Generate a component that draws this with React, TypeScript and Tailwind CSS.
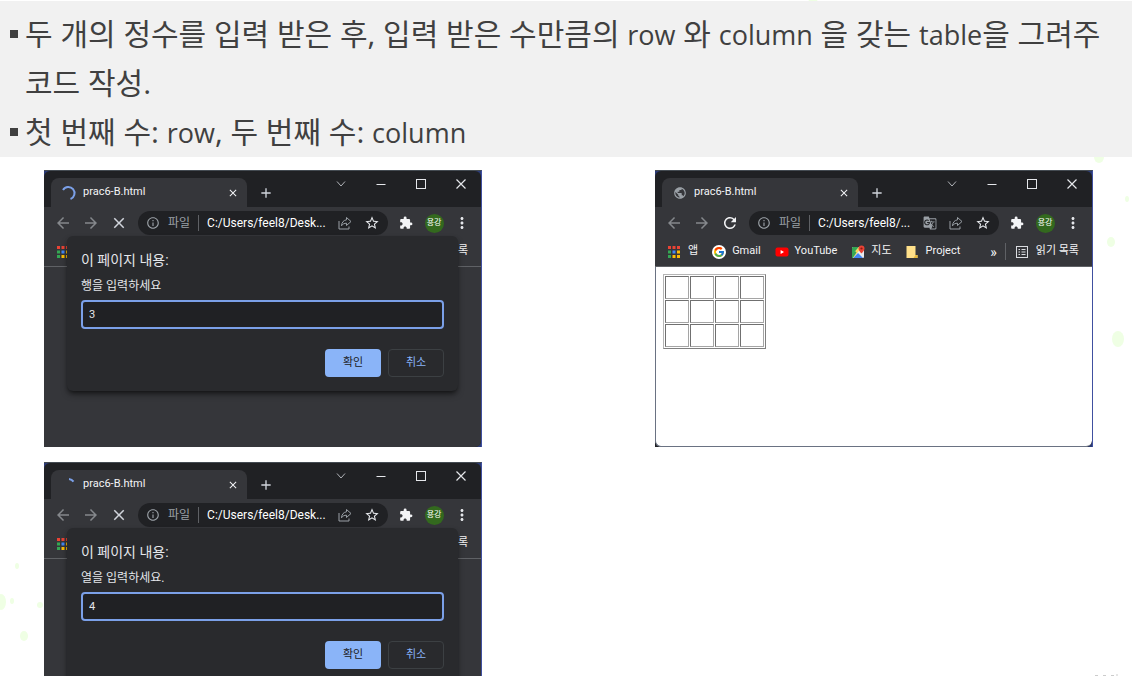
import React from 'react';
import { FcGoogle } from 'react-icons/fc';
import {
    MdAdd,
    MdArrowBack,
    MdArrowForward,
    MdClose,
    MdExtension,
    MdGTranslate,
    MdInfoOutline,
    MdMoreVert,
    MdPublic,
    MdRefresh,
    MdStarBorder,
} from 'react-icons/md';

const appColors = [
    '#ea4335', '#ea4335', '#ea4335',
    '#34a853', '#4285f4', '#fbbc04',
    '#34a853', '#fbbc04', '#fbbc04',
];

function AppsIcon() {
    return (
        <svg className="h-3 w-3 shrink-0" viewBox="0 0 12 12">
            {appColors.map((color, i) => (
                <rect key={i} x={(i % 3) * 4.5} y={Math.floor(i / 3) * 4.5} width="3" height="3" fill={color} />
            ))}
        </svg>
    );
}

function YouTubeIcon() {
    return (
        <svg className="h-3.5 w-3.5 shrink-0" viewBox="0 0 14 14">
            <rect x="0.5" y="2.5" width="13" height="9" rx="2" fill="#ff0000" />
            <path d="M5.6 5v4L9 7z" fill="#fff" />
        </svg>
    );
}

function MapsIcon() {
    return (
        <svg className="h-3.5 w-3.5 shrink-0" viewBox="0 0 14 14">
            <rect x="1" y="2" width="12" height="11" rx="1" fill="#e8eaed" />
            <path d="M1 3a1 1 0 0 1 1-1h6L1 10z" fill="#34a853" />
            <path d="M2 13l5-5 5 5z" fill="#4285f4" />
            <path d="M1 10l7-8 1.5 2L2 13H1z" fill="#fbd75b" />
            <path d="M1 13V9l3-3 1.5 1.5L1.8 13z" fill="#34a853" />
            <path d="M10.5 0.5a3 3 0 0 1 3 3c0 2-3 5-3 5s-3-3-3-5a3 3 0 0 1 3-3z" fill="#ea4335" />
            <circle cx="10.5" cy="3.5" r="1.1" fill="#8c1a11" />
        </svg>
    );
}

function FolderIcon() {
    return (
        <svg className="h-3 w-3 shrink-0" viewBox="0 0 12 12">
            <path d="M0.5 0h9v9h2v3h-11z" fill="#ffe08a" />
            <path d="M9.5 9h2v3h-4z" fill="#e8b93c" />
        </svg>
    );
}

function ReadingListIcon() {
    return (
        <svg className="h-3 w-3 shrink-0" viewBox="0 0 12 12" fill="none" stroke="#dadce0">
            <rect x="0.5" y="0.5" width="11" height="11" />
            <path d="M2.5 3.5h1.5M2.5 6h1.5M2.5 8.5h1.5M5.5 3.5h4M5.5 6h4M5.5 8.5h4" />
        </svg>
    );
}

function ShareIcon() {
    return (
        <svg className="h-3.5 w-3.5" viewBox="0 0 14 14" fill="none" stroke="#9aa0a6" strokeLinejoin="round">
            <path d="M1 5v8h10v-2.5" />
            <path d="M8.5 1.5l4.5 4-4.5 4V7.2C6.3 7.2 4.6 8 3.5 9.8 3.7 6.5 5.5 4.2 8.5 3.8z" />
        </svg>
    );
}

function Spinner({ short }: { short?: boolean }) {
    return (
        <svg className="h-4 w-4" viewBox="0 0 16 16" fill="none" stroke="#7ba0e8" strokeWidth="2">
            <path d={short ? 'M8 2a6 6 0 0 1 4.5 2.6' : 'M2 5a6.2 6.2 0 1 1 7.5 9'} />
        </svg>
    );
}

function WindowControls() {
    const button = 'flex h-[26px] w-10 items-center justify-center';
    return (
        <div className="ml-auto flex text-gray-200">
            <button className={button} aria-label="Search tabs">
                <svg className="h-2.5 w-2.5" viewBox="0 0 10 10" fill="none" stroke="#b0b3b8">
                    <path d="M1 2.5l4 4.5 4-4.5" />
                </svg>
            </button>
            <button className={button} aria-label="Minimize">
                <svg className="h-2.5 w-2.5" viewBox="0 0 10 10" stroke="currentColor">
                    <path d="M0.5 5.5h9" />
                </svg>
            </button>
            <button className={button} aria-label="Maximize">
                <svg className="h-2.5 w-2.5" viewBox="0 0 10 10" fill="none" stroke="currentColor">
                    <rect x="0.5" y="0.5" width="9" height="9" />
                </svg>
            </button>
            <button className={button} aria-label="Close">
                <svg className="h-2.5 w-2.5" viewBox="0 0 10 10" stroke="currentColor" strokeWidth="1.2">
                    <path d="M0.5 0.5l9 9M9.5 0.5l-9 9" />
                </svg>
            </button>
        </div>
    );
}

function BookmarkBar({ covered }: { covered?: boolean }) {
    const bar =
        'flex h-7 shrink-0 items-center border-b border-[#5f6165] bg-[#35363a] pr-[13px] pb-0.5 pl-[13px] text-[11px] whitespace-nowrap text-gray-100';

    // a dialog lies over the bar, only its two ends stay visible
    if (covered) {
        return (
            <nav className={`${bar} justify-between`}>
                <AppsIcon />
                <span>록</span>
            </nav>
        );
    }

    return (
        <nav className={bar}>
            <a href="#apps" className="flex items-center gap-2">
                <AppsIcon />앱
            </a>
            <a href="#gmail" className="ml-3.5 flex items-center gap-1.5">
                <span className="flex h-3.5 w-3.5 items-center justify-center rounded-full bg-white">
                    <FcGoogle className="h-3 w-3" />
                </span>
                Gmail
            </a>
            <a href="#youtube" className="ml-3.5 flex items-center gap-1.5">
                <YouTubeIcon />YouTube
            </a>
            <a href="#map" className="ml-3.5 flex items-center gap-1.5">
                <MapsIcon />지도
            </a>
            <a href="#project" className="ml-3.5 flex items-center gap-2">
                <FolderIcon />Project
            </a>
            <button className="ml-auto text-sm leading-4" aria-label="More bookmarks">»</button>
            <a href="#reading-list" className="ml-2 flex items-center gap-2 border-l border-[#5f6165] pl-2.5">
                <ReadingListIcon />읽기 목록
            </a>
        </nav>
    );
}

type BrowserProps = {
    url: string;
    favicon: React.ReactNode;
    loading?: boolean;
    children: React.ReactNode;
};

function Browser({ url, favicon, loading, children }: BrowserProps) {
    const tool = 'flex h-7 w-7 shrink-0 items-center justify-center';
    return (
        <section className="w-full max-w-[438px] border-t border-r border-t-[#444b52] border-r-[#4050a0] bg-[#2b3a75] font-['Roboto','Noto_Sans_CJK_KR',sans-serif]">
            <div className="relative flex h-[276px] flex-col overflow-hidden rounded-t-md rounded-br-md bg-[#202124]">
                <div className="flex h-9 shrink-0 pl-[7px]">
                    <div className="mt-[7px] flex w-[196px] items-center rounded-t-lg bg-[#35363a] px-2 text-[11px] text-gray-100">
                        <span className="flex w-5 justify-center">{favicon}</span>
                        <span className="ml-1 flex-1">prac6-B.html</span>
                        <button aria-label="Close tab">
                            <MdClose className="h-3 w-3" />
                        </button>
                    </div>
                    <button className="mt-[7px] ml-[11px] flex items-center text-gray-300" aria-label="New tab">
                        <MdAdd className="h-4 w-4" />
                    </button>
                    <WindowControls />
                </div>
                <div className="flex h-8 shrink-0 items-center bg-[#35363a] px-[5px]">
                    <button className={tool} aria-label="Back">
                        <MdArrowBack className="h-[18px] w-[18px] text-[#85888c]" />
                    </button>
                    <button className={tool} aria-label="Forward">
                        <MdArrowForward className="h-[18px] w-[18px] text-[#85888c]" />
                    </button>
                    <button className={tool} aria-label={loading ? 'Stop' : 'Reload'}>
                        {loading ? (
                            <MdClose className="h-[18px] w-[18px] text-gray-300" />
                        ) : (
                            <MdRefresh className="h-[18px] w-[18px] text-gray-100" />
                        )}
                    </button>
                    <div className="mr-1 ml-[5px] flex h-6 min-w-0 flex-1 items-center rounded-full bg-[#202124] pr-2 pl-2 text-xs whitespace-nowrap">
                        <MdInfoOutline className="h-3.5 w-3.5 shrink-0 text-[#9aa0a6]" />
                        <span className="ml-2 text-[#9aa0a6]">파일</span>
                        <span className="ml-2 border-l border-[#5f6165] pl-2 text-white">{url}</span>
                        <span className="ml-auto flex items-center gap-3 text-[#9aa0a6]">
                            {!loading && <MdGTranslate className="h-3.5 w-3.5" />}
                            <ShareIcon />
                            <MdStarBorder className="h-4 w-4 text-gray-200" />
                        </span>
                    </div>
                    <button className={tool} aria-label="Extensions">
                        <MdExtension className="h-3.5 w-3.5 text-gray-100" />
                    </button>
                    <button className={tool}>
                        <span className="flex h-[19px] w-[19px] items-center justify-center rounded-full bg-[#33691e] text-[8px] text-white">
                            용강
                        </span>
                    </button>
                    <button className={tool} aria-label="Menu">
                        <MdMoreVert className="h-[18px] w-[18px] text-gray-200" />
                    </button>
                </div>
                <BookmarkBar covered={loading} />
                {children}
            </div>
        </section>
    );
}

function PromptBrowser({ message, value, favicon }: { message: string; value: string; favicon: React.ReactNode }) {
    return (
        <Browser url="C:/Users/feel8/Desk..." favicon={favicon} loading>
            <div className="flex-1 bg-[#35363a]" />
            <form className="absolute inset-x-[23px] top-[65px] rounded-md bg-[#292a2d] p-3.5 text-gray-200 shadow-md shadow-black/50">
                <h2 className="text-sm leading-5">이 페이지 내용:</h2>
                <label className="mt-1.5 block text-xs leading-5">
                    {message}
                    <input
                        defaultValue={value}
                        className="mt-1 block h-[29px] w-full rounded-sm border-2 border-[#7ba0e8] bg-[#202124] px-1.5 text-[11px] outline-none"
                    />
                </label>
                <div className="mt-5 flex justify-end gap-[7px] text-[11px]">
                    <button type="button" className="h-7 w-14 rounded-sm bg-[#8ab4f8] text-[#202124]">확인</button>
                    <button type="button" className="h-7 w-14 rounded-sm border border-[#3c4043] text-[#8ab4f8]">취소</button>
                </div>
            </form>
        </Browser>
    );
}

function ResultTable() {
    return (
        <table className="m-[7px] border-separate border-spacing-px border border-t-[#b5b5b5] border-r-[#808080] border-b-[#808080] border-l-[#b5b5b5]">
            <tbody>
                {[0, 1, 2].map((row) => (
                    <tr key={row}>
                        {[0, 1, 2, 3].map((col) => (
                            <td
                                key={col}
                                className="h-[23px] w-6 border border-t-[#707070] border-r-[#a5a5a5] border-b-[#a5a5a5] border-l-[#707070] p-0"
                            />
                        ))}
                    </tr>
                ))}
            </tbody>
        </table>
    );
}

function Background() {
    return (
        <svg className="absolute inset-0 h-full w-full" viewBox="0 0 1134 676" preserveAspectRatio="xMidYMid slice">
            <g fill="#efffe4">
                <ellipse cx="813" cy="-2" rx="5" ry="5" />
                <ellipse cx="1099" cy="157" rx="5" ry="6" />
                <ellipse cx="1127" cy="199" rx="2" ry="3" />
                <ellipse cx="1111" cy="242" rx="4" ry="5" />
                <ellipse cx="1118" cy="339" rx="6" ry="8" />
                <ellipse cx="17" cy="566" rx="2" ry="3" />
                <ellipse cx="1" cy="602" rx="5" ry="8" />
                <ellipse cx="12" cy="601" rx="2" ry="3" />
                <ellipse cx="40" cy="605" rx="3" ry="3" />
                <ellipse cx="24" cy="636" rx="4" ry="5" />
            </g>
            <path d="M1095 675.5h3M1103 675.5h3M1111 675.5h3M1116 675h2" stroke="#cccccc" />
        </svg>
    );
}

function Latin({ children }: { children: React.ReactNode }) {
    return <span className="text-[27px] leading-none">{children}</span>;
}

export default function App() {
    return (
        <main className="relative h-screen overflow-hidden bg-white pt-px font-['Open_Sans','Noto_Sans_CJK_KR',sans-serif]">
            <Background />
            <div className="relative mr-0.5 bg-[#f1f1f1] pt-2 pb-px pl-2.5 text-[30px] leading-[49px] text-[#404040]">
                <ul>
                    <li className="flex gap-[7px]">
                        <span className="mt-[21px] h-2 w-2 shrink-0 bg-[#404040]" />
                        <p>
                            두 개의 정수를 입력 받은 후, 입력 받은 수만큼의 <Latin>row</Latin> 와{' '}
                            <Latin>column</Latin> 을 갖는 <Latin>table</Latin>을 그려주
                            <br />
                            코드 작성.
                        </p>
                    </li>
                    <li className="flex gap-[7px]">
                        <span className="mt-[21px] h-2 w-2 shrink-0 bg-[#404040]" />
                        <p>
                            첫 번째 수: <Latin>row</Latin>, 두 번째 수: <Latin>column</Latin>
                        </p>
                    </li>
                </ul>
            </div>
            <div className="relative mt-[13px] flex items-start justify-between gap-6 pr-[41px] pl-11">
                <div className="flex flex-1 flex-col gap-[15px]">
                    <PromptBrowser message="행을 입력하세요" value="3" favicon={<Spinner />} />
                    <PromptBrowser message="열을 입력하세요." value="4" favicon={<Spinner short />} />
                </div>
                <div className="flex flex-1 justify-end">
                    <Browser url="C:/Users/feel8/..." favicon={<MdPublic className="h-3.5 w-3.5 text-[#9aa0a6]" />}>
                        <div className="flex-1 rounded-b-md border-b border-l border-gray-500 bg-white">
                            <ResultTable />
                        </div>
                    </Browser>
                </div>
            </div>
        </main>
    );
}
